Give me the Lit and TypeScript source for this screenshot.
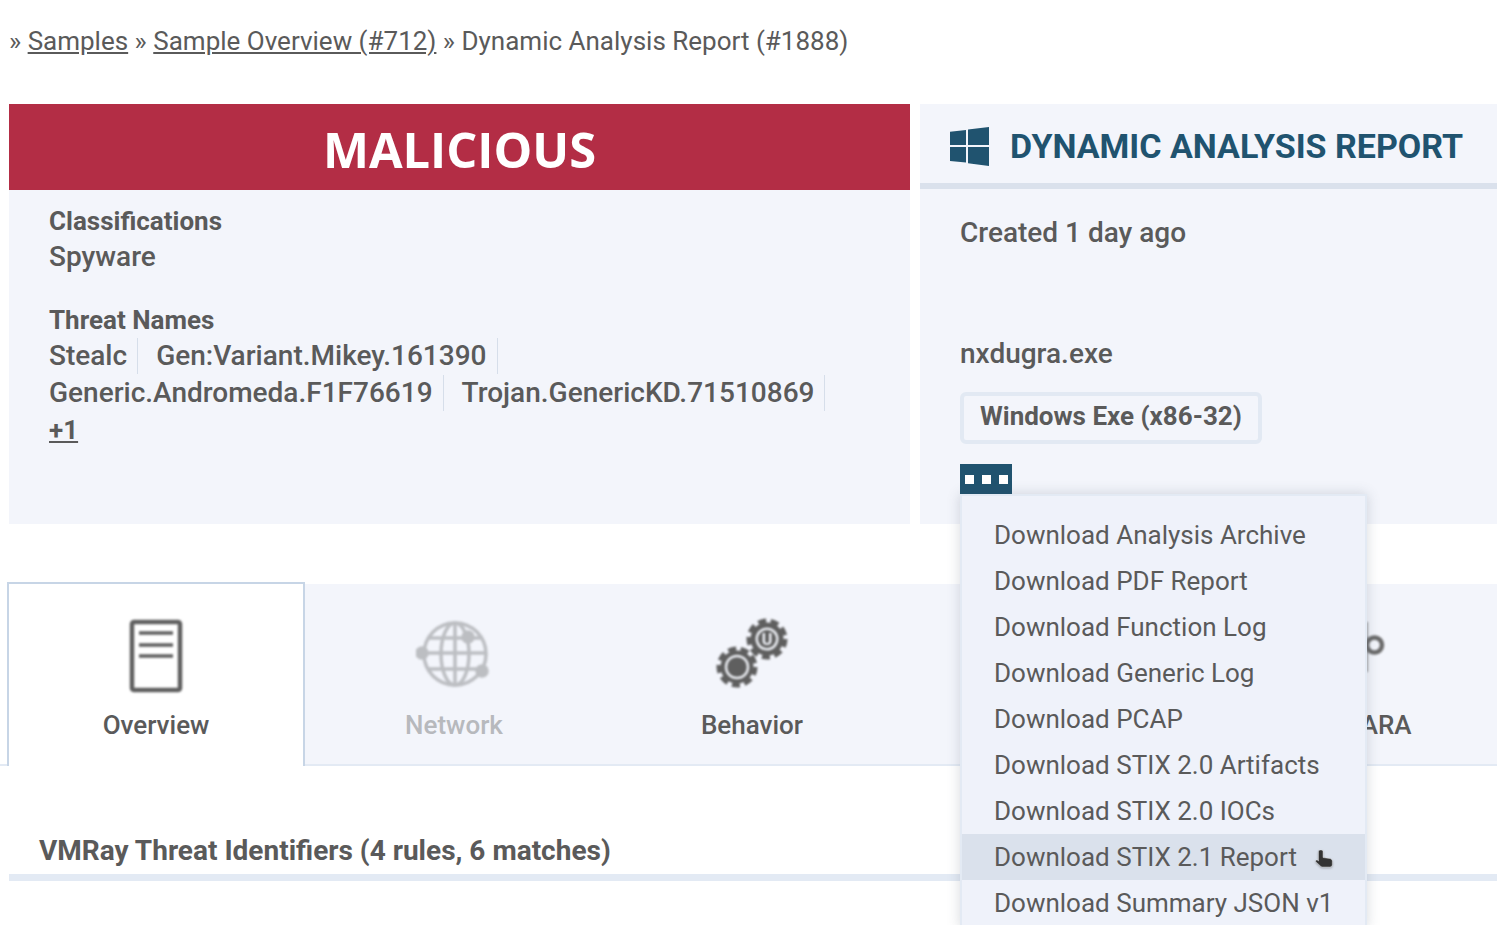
import { LitElement, html, css, svg } from "lit";
import { customElement } from "lit/decorators.js";

const gear = (cx: number, cy: number) => svg`
  <circle cx=${cx} cy=${cy} r="16.500" fill="#5f5f5f"/>
  <circle cx=${cx} cy=${cy} r="18" fill="none" stroke="#5f5f5f" stroke-width="5" stroke-dasharray="8 4.570"/>
`;

const menu = [
  "Download Analysis Archive",
  "Download PDF Report",
  "Download Function Log",
  "Download Generic Log",
  "Download PCAP",
  "Download STIX 2.0 Artifacts",
  "Download STIX 2.0 IOCs",
  "Download STIX 2.1 Report",
  "Download Summary JSON v1",
];

@customElement("app-root")
export class AppRoot extends LitElement {
  static styles = css`
    :host {
      display: block;
      position: relative;
      width: 1497px;
      height: 925px;
      overflow: hidden;
      background: #fff;
      font-family: Roboto, "Liberation Sans", sans-serif;
      color: #5a5a5a;
      font-size: 28px;
    }
    .crumbs { height: 104px; padding: 24px 0 0 9px; box-sizing: border-box; line-height: 34px; font-size: 26px; white-space: pre; }
    .crumbs a { color: #5a5a5a; text-decoration: underline; }
    .top { display: flex; gap: 10px; padding-left: 9px; height: 420px; }
    .left { width: 901px; background: #f3f5fb; }
    .banner { height: 86px; background: #b32d45; color: #fff; font-family: "Open Sans", sans-serif; font-size: 48.800px; font-weight: 700; text-align: center; line-height: 90px; }
    .lbody { padding: 13px 40px 0; }
    .lbody b { font-weight: 700; font-size: 26px; display: block; line-height: 36px; }
    .val { font-weight: 500; line-height: 36px; }
    .group { margin-top: 27px; }
    .tags { font-weight: 500; line-height: 37px; }
    .tag { display: inline-block; line-height: 36px; height: 36px; padding-right: 10px; margin-right: 18px; border-right: 1px solid #d6deea; vertical-align: top; }
    .more { font-weight: 700; font-size: 26px; line-height: 37px; text-decoration: underline; display: block; }
    .right { flex: 1; background: #f3f5fb; }
    .rhead { height: 79px; border-bottom: 6px solid #dae1ec; display: flex; align-items: center; gap: 21px; padding: 0 0 0 30px; color: #20536f; font-weight: 700; font-size: 34px; }
    .rhead span { position: relative; top: 2px; }
    .rhead svg { position: relative; top: 3px; }
    .rbody { padding: 25px 40px 0; font-weight: 500; }
    .created { line-height: 38px; height: 121px; }
    .fname { line-height: 38px; }
    .badge { display: inline-block; box-sizing: border-box; height: 52px; margin-top: 19px; padding: 0 16px; border: 4px solid #e2e9f3; border-radius: 6px; font-weight: 700; font-size: 26px; line-height: 41px; }
    .dots { width: 52px; height: 30px; background: #20536f; margin-top: 20px; display: flex; gap: 8px; align-items: center; padding-left: 5px; box-sizing: border-box; }
    .dots i { width: 9px; height: 9px; background: #fff; display: block; }
    .tabs { margin-top: 58px; height: 184px; display: flex; border-bottom: 2px solid #e3eaf4; box-sizing: border-box; }
    .tab { width: 298px; flex: none; height: 180px; margin-top: 2px; background: #f3f5fb; display: flex; flex-direction: column; align-items: center; font-weight: 500; font-size: 26px; box-sizing: border-box; }
    .tab svg { display: block; margin-top: 34px; height: 76px; filter: blur(.8px); }
    .tab span { margin-top: 16px; line-height: 30px; white-space: nowrap; }
    .tab span.shift { margin-right: 12px; }
    .tab.active { width: 298px; margin: 0 0 -2px 7px; height: 184px; background: #fff; border: 2px solid #c7d5e6; border-bottom: none; }
    .tab.off { color: #b7b9bd; }
    .threat { margin: 64px 0 0 9px; border-bottom: 7px solid #e3eaf4; padding-left: 30px; height: 44px; line-height: 42px; font-weight: 700; font-size: 28px; }
    .menu { position: absolute; left: 960px; top: 494px; width: 407px; box-sizing: border-box; background: #eff2fa; border: 2px solid #e3eaf4; padding-top: 16px; box-shadow: 0 0 12px rgba(70, 80, 100, .22); font-size: 26px; }
    .menu div { height: 46px; line-height: 47px; padding-left: 32px; white-space: nowrap; }
    .menu div.hover { background: #dae1ec; }
    .cursor { position: absolute; left: 1315px; top: 849px; filter: drop-shadow(0 1px 1px rgba(0,0,0,.3)); }
  `;

  render() {
    return html`
      <div class="crumbs">» <a>Samples</a> » <a>Sample Overview (#712)</a> » Dynamic Analysis Report (#1888)</div>
      <div class="top">
        <section class="left">
          <div class="banner">MALICIOUS</div>
          <div class="lbody">
            <b>Classifications</b>
            <div class="val">Spyware</div>
            <div class="group">
              <b>Threat Names</b>
              <div class="tags">
                <span class="tag">Stealc</span><span class="tag">Gen:Variant.Mikey.161390</span><br />
                <span class="tag">Generic.Andromeda.F1F76619</span><span class="tag">Trojan.GenericKD.71510869</span>
              </div>
              <a class="more">+1</a>
            </div>
          </div>
        </section>
        <section class="right">
          <div class="rhead">
            <svg width="39" height="39" viewBox="0 0 39 39"><path fill="#20536f" d="M0 4.700 16 3V18H0zM18 2.500 39 0V18H18zM0 20h16v15.500L0 34zM18 20h21v19l-21-2.800z"/></svg>
            <span>DYNAMIC ANALYSIS REPORT</span>
          </div>
          <div class="rbody">
            <div class="created">Created 1 day ago</div>
            <div class="fname">nxdugra.exe</div>
            <div class="badge">Windows Exe (x86-32)</div>
            <div class="dots"><i></i><i></i><i></i></div>
          </div>
        </section>
      </div>
      <div class="tabs">
        <div class="tab active">
          <svg width="54" height="76" viewBox="0 0 54 76" fill="none" stroke="#5f5f5f">
            <rect x="3" y="4" width="48" height="68" rx="2" stroke-width="4.500"/>
            <path stroke-width="3.400" d="M10 15h34M10 27h34M10 38h34"/>
          </svg>
          <span>Overview</span>
        </div>
        <div class="tab off">
          <svg width="76" height="76" viewBox="0 0 76 76" fill="none" stroke="#bcbec2" stroke-width="3.500">
            <circle cx="39" cy="36" r="31"/>
            <ellipse cx="39" cy="36" rx="14" ry="31"/>
            <path d="M39 4v64M13 20h52M8 35h62M13 51h52"/>
            <circle cx="52" cy="19" r="5" fill="#bcbec2"/><circle cx="6" cy="35" r="5" fill="#bcbec2"/><circle cx="66" cy="53" r="5" fill="#bcbec2"/>
          </svg>
          <span>Network</span>
        </div>
        <div class="tab">
          <svg width="76" height="76" viewBox="0 0 76 76">
            ${gear(23, 49)}
            <circle cx="23" cy="49" r="11" fill="none" stroke="#e9ebf0" stroke-width="2.500"/>
            ${gear(53, 21)}
            <circle cx="53" cy="21" r="11.500" fill="#e9ebf0"/>
            <circle cx="53" cy="21" r="9" fill="#5f5f5f"/>
            <text x="53" y="27" font-size="16" font-weight="700" text-anchor="middle" fill="#f3f5fb" font-family="Roboto">U</text>
          </svg>
          <span>Behavior</span>
        </div>
        <div class="tab"></div>
        <div class="tab">
          <svg width="76" height="76" viewBox="0 0 76 76" fill="none" stroke="#6a6a6a">
            <path stroke-width="1.200" d="M57 4v50"/>
            <circle cx="64.500" cy="27" r="7.500" stroke-width="4.500"/>
          </svg>
          <span class="shift">Static YARA</span>
        </div>
      </div>
      <div class="threat">VMRay Threat Identifiers (4 rules, 6 matches)</div>
      <div class="menu">
        ${menu.map((m, i) => html`<div class=${i === 7 ? "hover" : ""}>${m}</div>`)}
      </div>
      <svg class="cursor" width="20" height="21" viewBox="0 0 20 21">
        <path d="M3.500 2.500C3.500 .5 8 .5 8 2.500V8.500l6.500 1c1.800.3 2.800 1.200 2.800 2.700V15.500c0 1.500-1 2.500-2.500 2.500H7.500C6 18 5 16.500 3.800 15.500L1 13c-1-1 .3-2.800 1.500-1.800l1 .8z" fill="#333" stroke="#f4f4f4" stroke-width=".4"/>
      </svg>
    `;
  }
}
